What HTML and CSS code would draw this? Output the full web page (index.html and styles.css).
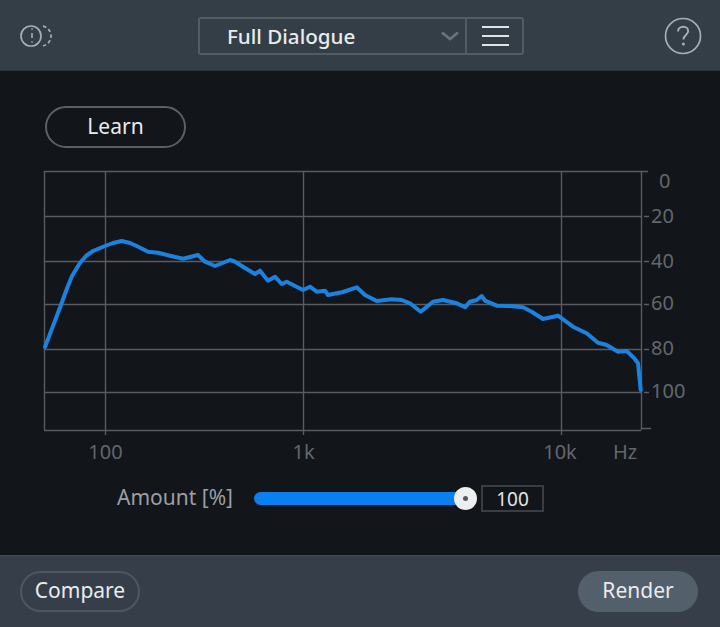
FILE: index.html
```html
<!DOCTYPE html>
<html lang="en">
<head>
    <meta charset="UTF-8">
    <title>Dialogue Match</title>
    <link rel="stylesheet" href="styles.css">
</head>
<body>

<div class="panel">
    <!-- Top bar -->
    <header class="topbar">
        <svg class="ab-icon" width="36" height="26" viewBox="0 0 36 26" fill="none">
            <circle cx="11" cy="13" r="10" stroke="#a7aeb4" stroke-width="1.7"/>
            <path d="M23 3.2a10 10 0 0 1 0 19.6" stroke="#a7aeb4" stroke-width="1.7" stroke-dasharray="3.5 2.5"/>
            <path d="M12 10v5" stroke="#a7aeb4" stroke-width="1.6"/>
            <path d="M12 5v2M12 18v2" stroke="#8b949b" stroke-width="1.4"/>
        </svg>
        <div class="preset">
            <div class="preset-name">
                <span>Full Dialogue</span>
                <svg width="20" height="10" viewBox="0 0 20 10" fill="none">
                    <path d="M2 1.5l8 6.5 8-6.5" stroke="#69737c" stroke-width="2.8"/>
                </svg>
            </div>
            <div class="preset-menu">
                <i></i><i></i><i></i>
            </div>
        </div>
        <svg class="help" width="38" height="38" viewBox="0 0 38 38" fill="none">
            <circle cx="19" cy="19" r="17.5" stroke="#a7aeb4" stroke-width="1.7"/>
            <path d="M14 14.5c0-3 2.3-4.8 5.2-4.8 3 0 5 1.900 5 4.400 0 3.900-4.800 4-4.800 8.400" stroke="#a7aeb4" stroke-width="1.9"/>
            <circle cx="19.4" cy="27" r="1.5" fill="#a7aeb4"/>
        </svg>
    </header>

    <!-- Main area -->
    <main class="content">
        <button class="btn learn">Learn</button>

        <svg class="chart" width="720" height="305" viewBox="0 165 720 305" fill="none">
            <g class="grid">
                <path d="M44 171.5H641M44 216.5H641M44 261.5H641M44 304.5H641M44 349.5H641M44 392.5H641M44 430.5H641"/>
                <path d="M44.5 171V430M105.5 171V435M303.5 171V435M561.5 171V435M641.5 171V430"/>
                <path d="M641 171.5H648M644 216.5H649M644 261.5H649M644 304.5H649M644 349.5H649M644 392.5H649M641 428.5H651"/>
            </g>
            <polyline class="curve" points="45,347 53,326 61.7,303 66,291 72,276 80,263 86,256 93,251 105,246 113,243 121.7,241 130,243 136.7,246 148,251.7 158,252.7 170,255.7 183,258.7 198,255 205,261.7 215,266 230,260 235,261.7 245,268 255,274 260,270.7 268,280.7 275,276.7 281.7,284 286.7,281.7 303,290 310,286.7 316.7,291.7 325,290.7 328,295 343,292 356.7,287.3 365,295 376.7,301 391.7,299.3 401.7,300 410,303.3 420.7,311.7 433,301.7 443,300 456.7,303.3 465,307.3 470,301.7 476.7,300 481.7,296 485,300.7 496.7,305.7 510,306 523,307.3 531.7,311.7 543,319 558,315.7 573,326.7 586.7,333.3 598,342.7 606.7,345 618,351.7 626.7,351 634,358 638,363.3 640.7,390"/>
            <g class="labels">
                <text x="105.5" y="459" text-anchor="middle">100</text>
                <text x="303.5" y="459" text-anchor="middle">1k</text>
                <text x="560" y="459" text-anchor="middle">10k</text>
                <text x="625" y="459" text-anchor="middle">Hz</text>
                <text x="659" y="188">0</text>
                <text x="651" y="223">20</text>
                <text x="651" y="268">40</text>
                <text x="651" y="310">60</text>
                <text x="651" y="355">80</text>
                <text x="651" y="398">100</text>
            </g>
        </svg>

        <div class="amount">
            <span class="amount-label">Amount [%]</span>
            <div class="slider">
                <div class="slider-fill"></div>
                <div class="slider-thumb"></div>
            </div>
            <div class="amount-value">100</div>
        </div>
    </main>

    <!-- Bottom bar -->
    <footer class="bottombar">
        <button class="btn compare">Compare</button>
        <button class="btn render">Render</button>
    </footer>
</div>

</body>
</html>
```

FILE: styles.css
```css
html, body {
    margin: 0;
    padding: 0;
    background-color: #12151a;
}
.panel {
    width: 720px;
    height: 627px;
    display: flex;
    flex-direction: column;
    overflow: hidden;
    font-family: "Noto Sans", sans-serif;
    color: #e6e9eb;
}
.topbar {
    height: 71px;
    box-sizing: border-box;
    padding: 17px 18px 0 20px;
    display: flex;
    align-items: flex-start;
    background-color: #343e47;
    border-bottom: 1px solid #2a3239;
}
.ab-icon {
    margin-top: 6px;
}
.preset {
    display: flex;
    width: 326px;
    height: 38px;
    margin-left: 142px;
    box-sizing: border-box;
    border: 2px solid #525c65;
    border-radius: 3px;
}
.preset-name {
    flex: 1;
    display: flex;
    align-items: center;
    justify-content: space-between;
    padding: 0 5px 0 27px;
    font-size: 20.6px;
    font-weight: 500;
    color: #e9ecee;
    border-right: 2px solid #525c65;
}
.preset-menu {
    width: 55px;
    box-sizing: border-box;
    padding-left: 2px;
    display: flex;
    flex-direction: column;
    align-items: center;
    justify-content: center;
    gap: 7px;
}
.preset-menu i {
    display: block;
    width: 27px;
    height: 2px;
    background-color: #dfe3e6;
}
.help {
    margin-left: auto;
}
.content {
    flex: 1;
    display: flex;
    flex-direction: column;
    padding-top: 35px;
}
.btn {
    font-family: inherit;
    font-size: 21px;
    color: #e9ecee;
    background: none;
    border: 2px solid #4b535b;
    border-radius: 21px;
    padding: 0 0 3px;
    cursor: pointer;
}
.learn {
    width: 141px;
    height: 42px;
    margin-left: 45px;
    border-color: #5a6067;
}
.chart {
    display: block;
    margin-top: 17px;
}
.grid path {
    stroke: #585c62;
    stroke-width: 1.4;
}
.curve {
    stroke: #1c82e0;
    stroke-width: 4;
    stroke-linejoin: round;
    stroke-linecap: round;
}
.labels text {
    font-family: "Noto Sans", sans-serif;
    font-size: 20px;
    fill: #62676d;
}
.amount {
    display: flex;
    align-items: center;
    margin-top: 15px;
    padding-left: 117px;
}
.amount-label {
    width: 137px;
    padding-bottom: 3px;
    font-size: 21px;
    line-height: 24px;
    color: #9aa0a5;
    white-space: nowrap;
}
.slider {
    position: relative;
    width: 211px;
    height: 13px;
}
.slider-fill {
    height: 100%;
    border-radius: 7px 0 0 7px;
    background-color: #0a7ff0;
}
.slider-thumb {
    position: absolute;
    right: -12px;
    top: -5px;
    width: 23px;
    height: 23px;
    box-sizing: border-box;
    border-radius: 50%;
    border: 9px solid #eceeef;
    background-color: #55595e;
}
.amount-value {
    width: 63px;
    height: 27px;
    margin-left: 16px;
    box-sizing: border-box;
    border: 2px solid #3a3e44;
    font-size: 19px;
    line-height: 24px;
    text-align: center;
    color: #e2e5e7;
}
.bottombar {
    height: 72px;
    box-sizing: border-box;
    padding: 15px 22px 0 20px;
    display: flex;
    justify-content: space-between;
    align-items: flex-start;
    background-color: #363f49;
    border-top: 1px solid #414a54;
}
.compare {
    width: 120px;
    height: 41px;
    border-color: #4d5761;
}
.render {
    width: 120px;
    height: 41px;
    border: none;
    background-color: #535f6a;
}
```
